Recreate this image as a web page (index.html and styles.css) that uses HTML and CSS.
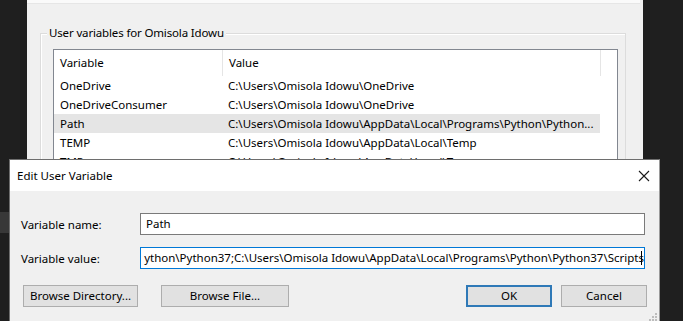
FILE: index.html
```html
<!DOCTYPE html>
<html>
<head>
<meta charset="utf-8">
<link rel="stylesheet" href="styles.css">
</head>
<body>
<div class="desk">
  <div class="patch"></div>
  <div class="bgwin">
    <div class="topstrip"></div>
    <div class="group">
      <span class="group-label">User variables for Omisola Idowu</span>
      <div class="list">
        <div class="lrow head">
          <div class="c1">Variable</div>
          <div class="c2">Value</div>
          <div class="c3"></div>
        </div>
        <div class="lrow">
          <div class="c1">OneDrive</div>
          <div class="c2">C:\Users\Omisola Idowu\OneDrive</div>
        </div>
        <div class="lrow">
          <div class="c1">OneDriveConsumer</div>
          <div class="c2">C:\Users\Omisola Idowu\OneDrive</div>
        </div>
        <div class="lrow sel">
          <div class="c1">Path</div>
          <div class="c2">C:\Users\Omisola Idowu\AppData\Local\Programs\Python\Python...</div>
        </div>
        <div class="lrow">
          <div class="c1">TEMP</div>
          <div class="c2">C:\Users\Omisola Idowu\AppData\Local\Temp</div>
        </div>
        <div class="lrow">
          <div class="c1">TMP</div>
          <div class="c2">C:\Users\Omisola Idowu\AppData\Local\Temp</div>
        </div>
      </div>
    </div>
  </div>

  <div class="dlg">
    <div class="dlg-title">
      <span>Edit User Variable</span>
      <svg class="close" width="12" height="12" viewBox="0 0 12 12"><path d="M1 1L11 11M11 1L1 11" stroke="#1a1a1a" stroke-width="1.1" fill="none"/></svg>
    </div>
    <div class="dlg-body">
      <div class="fields">
        <label class="flabel">Variable name:</label>
        <div class="inp">Path</div>
        <label class="flabel">Variable value:</label>
        <div class="inp focus"><span class="val">ython\Python37;C:\Users\Omisola Idowu\AppData\Local\Programs\Python\Python37\Scripts</span><span class="caret"></span></div>
      </div>
      <div class="btns">
        <div class="bgroup left">
          <div class="btn bdir">Browse Directory...</div>
          <div class="btn bfile">Browse File...</div>
        </div>
        <div class="bgroup right">
          <div class="btn ok">OK</div>
          <div class="btn cancel">Cancel</div>
        </div>
      </div>
    </div>
    <svg class="grip" width="9" height="9" viewBox="0 0 9 9">
      <rect x="6" y="0" width="2" height="2" fill="#bdbdbd"/>
      <rect x="3" y="3" width="2" height="2" fill="#bdbdbd"/>
      <rect x="6" y="3" width="2" height="2" fill="#bdbdbd"/>
      <rect x="0" y="6" width="2" height="2" fill="#bdbdbd"/>
      <rect x="3" y="6" width="2" height="2" fill="#bdbdbd"/>
      <rect x="6" y="6" width="2" height="2" fill="#bdbdbd"/>
    </svg>
  </div>
</div>
</body>
</html>
```
FILE: styles.css
```css
html, body {
  margin: 0;
  padding: 0;
}
body {
  background: #1f1f1f;
  font-family: "Noto Sans", "Open Sans", sans-serif;
  font-size: 11.5px;
  color: #000;
}
.desk {
  position: relative;
  width: 683px;
  height: 321px;
  overflow: hidden;
}
.patch {
  position: absolute;
  left: 0;
  top: 212px;
  width: 9px;
  height: 21px;
  background: #383838;
}
.bgwin {
  position: absolute;
  left: 27px;
  top: 0;
  width: 616px;
  height: 321px;
  background: #f0f0f0;
}
.topstrip {
  height: 3px;
  background: #fafafa;
  border-bottom: 1px solid #e6e6e6;
  margin-right: 3px;
}
.group {
  position: relative;
  margin: 29px 0 0 13px;
  width: 584px;
  height: 400px;
  border: 1px solid #dcdcdc;
  box-shadow: 1px 1px 0 #fff inset;
}
.group-label {
  position: absolute;
  left: 6px;
  top: -9px;
  padding: 0 2px;
  background: #f0f0f0;
  line-height: 16px;
  letter-spacing: -0.15px;
}
.list {
  margin: 15px 0 0 12px;
  width: 563px;
  height: 300px;
  border: 1px solid #828790;
  background: #fff;
}
.lrow {
  display: flex;
  height: 19px;
  line-height: 19px;
  white-space: nowrap;
}
.lrow.head {
  height: 26px;
  line-height: 26px;
}
.c1 {
  width: 162px;
  padding-left: 6px;
  flex: none;
}
.c2 {
  width: 372px;
  padding-left: 6px;
  flex: none;
}
.c3 {
  flex: 1;
}
.head .c1, .head .c2 {
  border-right: 1px solid #e5e5e5;
}
.head .c2 {
  width: 371px;
}
.lrow.sel .c1, .lrow.sel .c2 {
  background: #e5e5e5;
}
.dlg {
  position: absolute;
  left: 9px;
  top: 159px;
  width: 649px;
  height: 175px;
  background: #f0f0f0;
  border: 1px solid #6e6e6e;
  border-right-color: #9a9a9a;
}
.dlg-title {
  display: flex;
  align-items: center;
  justify-content: space-between;
  height: 31px;
  background: #fff;
  padding: 0 8px 0 7px;
  font-size: 11.5px;
}
.close {
  margin-right: 1px;
}
.dlg-body {
  padding: 22px 12px 0 11px;
}
.fields {
  display: grid;
  grid-template-columns: 119px 505px;
  row-gap: 12px;
  align-items: center;
}
.inp {
  height: 20px;
  line-height: 20px;
  border: 1px solid #7a7a7a;
  background: #fff;
  padding: 0 5px;
  white-space: nowrap;
  overflow: hidden;
  display: flex;
  justify-content: flex-start;
}
.inp.focus {
  border-color: #0078d7;
  justify-content: flex-end;
  padding: 0 2px 0 0;
}
.val {
  flex: none;
}
.caret {
  flex: none;
  width: 1px;
  height: 14px;
  margin-top: 3px;
  background: #000;
  margin-left: -3px;
}
.btns {
  display: flex;
  justify-content: space-between;
  margin: 16px 0 0 2px;
}
.bgroup {
  display: flex;
}
.bgroup.left {
  gap: 23px;
}
.bgroup.right {
  gap: 9px;
}
.btn {
  height: 20px;
  line-height: 20px;
  border: 1px solid #adadad;
  background: #e1e1e1;
  text-align: center;
}
.bdir { width: 113px; }
.bfile { width: 126px; }
.ok {
  width: 82px;
  border: 2px solid #2f79b7;
  height: 18px;
  line-height: 18px;
}
.cancel { width: 84px; }
.grip {
  position: absolute;
  right: 1px;
  top: 153px;
}
```
